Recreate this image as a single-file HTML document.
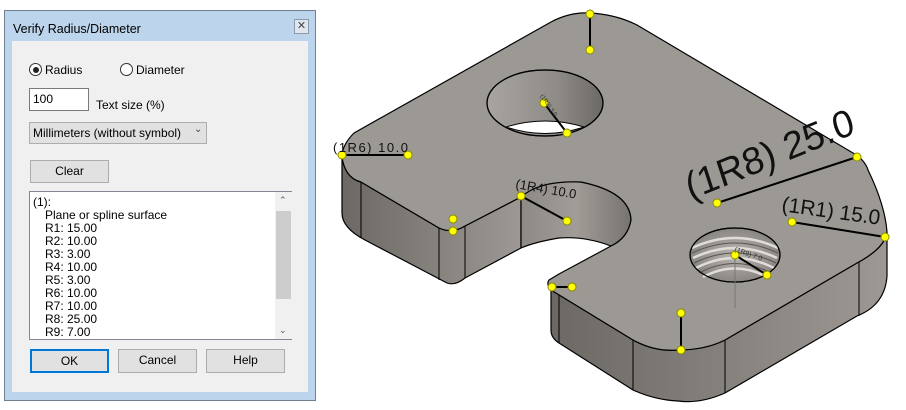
<!DOCTYPE html>
<html><head><meta charset="utf-8"><style>
*{margin:0;padding:0;box-sizing:border-box}
body{width:906px;height:410px;background:#fff;position:relative;overflow:hidden;font-family:"Liberation Sans",sans-serif;font-size:12px;color:#000}
.a{position:absolute}
.dlg{left:4px;top:10px;width:312px;height:391px;background:#bcd4ec;border:1px solid #6e7f90}
.title{left:8px;top:11px;font-size:12.5px}
.close{left:289px;top:8px;width:15px;height:15px;border:1px solid #8a9aab;background:#dfe6ee;font-size:11px;line-height:13px;text-align:center;color:#444}
.content{left:7px;top:30px;width:296px;height:351px;background:#f0f0f0}
.radio{width:13px;height:13px;border:1px solid #333;border-radius:50%;background:#fff}
.btn{background:#e1e1e1;border:1px solid #adadad;text-align:center;line-height:21px}
.list div{height:13px;line-height:13px;white-space:nowrap}
</style></head><body>
<div class="a dlg">
 <div class="a title">Verify Radius/Diameter</div>
 <div class="a close">✕</div>
 <div class="a content"></div>
</div>
<div class="a radio" style="left:29px;top:63px"><div class="a" style="left:2.5px;top:2.5px;width:6px;height:6px;border-radius:50%;background:#222"></div></div>
<div class="a" style="left:45px;top:63px">Radius</div>
<div class="a radio" style="left:120px;top:63px"></div>
<div class="a" style="left:136px;top:63px">Diameter</div>
<div class="a" style="left:29px;top:88px;width:60px;height:23px;background:#fff;border:1px solid #7a7a7a;padding:3px 3px">100</div>
<div class="a" style="left:96px;top:98px">Text size (%)</div>
<div class="a" style="left:29px;top:122px;width:178px;height:22px;background:#e1e1e1;border:1px solid #adadad;padding:3px 3px">Millimeters (without symbol)<span class="a" style="left:164px;top:1px;color:#444;font-size:10px">&#8964;</span></div>
<div class="a btn" style="left:30px;top:160px;width:79px;height:23px">Clear</div>
<div class="a list" style="left:29px;top:191px;width:263px;height:149px;background:#fff;border:1px solid #828790;padding:4px 0 0 3px">
 <div>(1):</div>
 <div style="padding-left:12px">Plane or spline surface</div>
 <div style="padding-left:12px">R1: 15.00</div>
 <div style="padding-left:12px">R2: 10.00</div>
 <div style="padding-left:12px">R3: 3.00</div>
 <div style="padding-left:12px">R4: 10.00</div>
 <div style="padding-left:12px">R5: 3.00</div>
 <div style="padding-left:12px">R6: 10.00</div>
 <div style="padding-left:12px">R7: 10.00</div>
 <div style="padding-left:12px">R8: 25.00</div>
 <div style="padding-left:12px">R9: 7.00</div>
 <div class="a" style="left:245px;top:0;width:17px;height:147px;background:#f0f0f0"></div>
 <div class="a" style="left:246px;top:19px;width:15px;height:88px;background:#cdcdcd"></div>
 <div class="a" style="left:249px;top:2px;font-size:9px;color:#555">&#8963;</div>
 <div class="a" style="left:249px;top:132px;font-size:9px;color:#555">&#8964;</div>
</div>
<div class="a btn" style="left:30px;top:349px;width:79px;height:24px;border:2px solid #0078d7;line-height:20px">OK</div>
<div class="a btn" style="left:118px;top:349px;width:79px;height:24px">Cancel</div>
<div class="a btn" style="left:206px;top:349px;width:79px;height:24px">Help</div>

<svg class="a" style="left:0;top:0" width="906" height="410" viewBox="0 0 906 410">
<defs>
<linearGradient id="sg" x1="0" x2="1" y1="0" y2="0"><stop offset="0" stop-color="#6c6864"/><stop offset="1" stop-color="#9d9893"/></linearGradient>
<linearGradient id="sg2" x1="0" x2="1"><stop offset="0" stop-color="#8d8985"/><stop offset=".5" stop-color="#a19c97"/><stop offset="1" stop-color="#777370"/></linearGradient>
<linearGradient id="hg" x1="0" x2="1"><stop offset="0" stop-color="#a8a49f"/><stop offset=".6" stop-color="#8f8b87"/><stop offset="1" stop-color="#6c6864"/></linearGradient>
<radialGradient id="th" cx=".5" cy=".5" r=".5"><stop offset="0" stop-color="#b8b4b0"/><stop offset="1" stop-color="#8a8682"/></radialGradient>
</defs>
<g stroke="#000" stroke-width="1.2" stroke-linejoin="round">
<path d="M342,157 Q345,178 361,182 L439,228 Q452,234 465,226 L521,197 L521,248 L465,278 Q455,286 447,283 L365,240 Q342,228 342,213 Z" fill="url(#sg)"/>
<path d="M521,197 Q540,180 581,182 Q630,192 631,220 Q628,238 611,246 Q585,236 559,238 Q535,242 521,248 Z" fill="url(#sg2)"/>
<path d="M551,290 L633,340 Q655,352 678,350 Q705,350 725,340 L857,263 Q885,248 887,232 L887,276 Q885,305 857,316 L725,393 Q700,404 678,401 Q655,400 633,390 L559,343 Q551,338 551,330 Z" fill="url(#sg)"/>
<path d="M342,157 Q342,145 354,133 L551,22 Q570,12 589,13 Q615,14 637,25 L853,153 Q865,160 868,170 Q885,205 887,232 Q885,248 857,263 L725,340 Q705,350 678,350 Q655,352 633,340 L551,290 Q546,284 549,280 L559,274 L611,246 Q628,238 631,220 Q630,192 581,182 Q540,180 521,197 L465,226 Q452,234 439,228 L361,182 Q345,178 342,157 Z" fill="#9c9894"/>
<ellipse cx="545" cy="103" rx="58" ry="33" fill="url(#hg)"/>
<path d="M506,127 Q545,115 584,127 Q545,140 506,127 Z" fill="#fff" stroke-width="1"/>
<ellipse cx="545" cy="103" rx="58" ry="33" fill="none"/>
<ellipse cx="735" cy="255" rx="45" ry="27" fill="url(#th)"/>
</g>
<g fill="none" stroke="#e0dcd8" stroke-width="2.5">
<path d="M692,248 Q735,228 778,248"/><path d="M693,258 Q735,238 777,258"/><path d="M696,268 Q735,248 774,268"/><path d="M703,277 Q735,260 767,277"/>
</g>
<g fill="none" stroke="#5a5652" stroke-width="1">
<path d="M692,253 Q735,233 778,253"/><path d="M694,263 Q735,243 776,263"/><path d="M699,273 Q735,254 771,273"/>
</g>
<ellipse cx="735" cy="255" rx="45" ry="27" fill="none" stroke="#000" stroke-width="1.2"/>
<g stroke="#000" stroke-width="1">
<line x1="361" y1="182" x2="361" y2="238"/><line x1="439" y1="228" x2="439" y2="280"/><line x1="465" y1="226" x2="465" y2="278"/><line x1="521" y1="197" x2="521" y2="248"/>
<line x1="559" y1="295" x2="559" y2="343"/><line x1="633" y1="340" x2="633" y2="390"/><line x1="725" y1="340" x2="725" y2="393"/><line x1="859" y1="262" x2="859" y2="316"/>
<line x1="735" y1="255" x2="735" y2="308" stroke="#777"/>
</g>
<g stroke="#000" stroke-width="2">
<line x1="590" y1="14" x2="590" y2="50"/><line x1="544" y1="103" x2="567" y2="133"/><line x1="342" y1="155" x2="408" y2="155"/>
<line x1="521" y1="196" x2="567" y2="221"/><line x1="717" y1="203" x2="857" y2="157"/><line x1="792" y1="222" x2="885" y2="237"/>
<line x1="735" y1="255" x2="767" y2="275"/><line x1="552" y1="287" x2="572" y2="287"/><line x1="681" y1="313" x2="681" y2="350"/>
</g>
<g fill="#ffff00" stroke="#8a8a00" stroke-width="1">
<circle cx="590" cy="14" r="4"/><circle cx="590" cy="50" r="4"/><circle cx="544" cy="103" r="4"/><circle cx="567" cy="133" r="4"/>
<circle cx="342" cy="155" r="4"/><circle cx="408" cy="155" r="4"/><circle cx="521" cy="196" r="4"/><circle cx="567" cy="221" r="4"/>
<circle cx="453" cy="219" r="4"/><circle cx="453" cy="231" r="4"/><circle cx="857" cy="157" r="4"/><circle cx="717" cy="203" r="4"/>
<circle cx="792" cy="222" r="4"/><circle cx="885" cy="237" r="4"/><circle cx="735" cy="255" r="4"/><circle cx="767" cy="275" r="4"/>
<circle cx="552" cy="287" r="4"/><circle cx="572" cy="287" r="4"/><circle cx="681" cy="313" r="4"/><circle cx="681" cy="350" r="4"/>
</g>
<g font-family="Liberation Sans, sans-serif" fill="#111">
<text x="333" y="152" font-size="13" letter-spacing="1.5">(1R6) 10.0</text>
<text x="515" y="188" font-size="13" transform="rotate(10 515 188)">(1R4) 10.0</text>
<text x="703" y="195" font-size="38" transform="rotate(-22 703 195) skewX(-4)">(1R8) 25.0</text>
<text x="781" y="211" font-size="21" transform="rotate(8 781 211)">(1R1) 15.0</text>
<text x="540" y="96" font-size="6" transform="rotate(55 540 96)" fill="#333">(1R3) 3.0</text>
<text x="734" y="251" font-size="7" transform="rotate(20 734 251)" fill="#333">(1R9) 7.0</text>
</g>
</svg>
</body></html>
